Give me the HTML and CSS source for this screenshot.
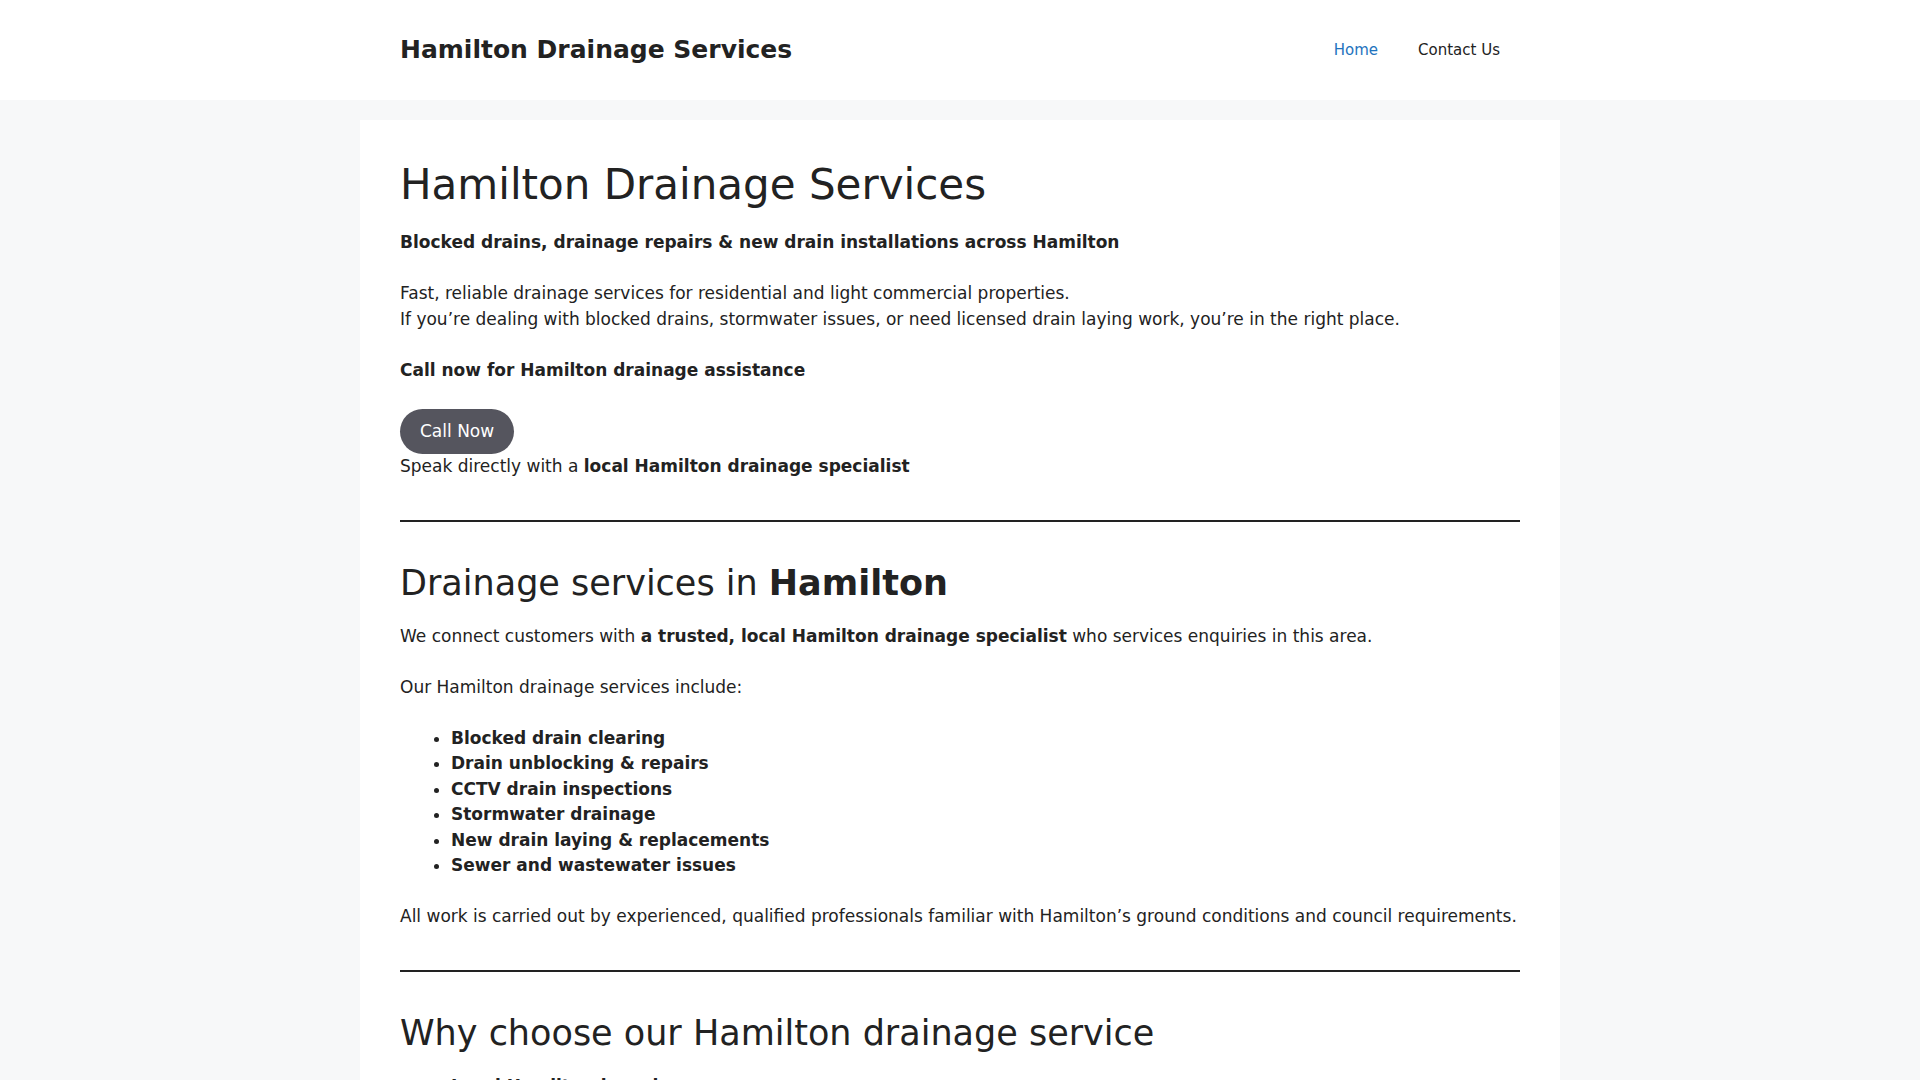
FILE: index.html
```html
<!DOCTYPE html>
<html lang="en">
<head>
<meta charset="utf-8">
<title>Hamilton Drainage Services</title>
<link rel="stylesheet" href="styles.css">
</head>
<body>
<header class="site-header">
  <div class="inside-header">
    <p class="main-title"><a href="#">Hamilton Drainage Services</a></p>
    <nav class="main-nav">
      <ul class="menu">
        <li class="current"><a href="#">Home</a></li>
        <li><a href="#">Contact Us</a></li>
      </ul>
    </nav>
  </div>
</header>
<div class="site-content">
  <main class="content-box">
    <h1>Hamilton Drainage Services</h1>
    <p><strong>Blocked drains, drainage repairs &amp; new drain installations across Hamilton</strong></p>
    <p>Fast, reliable drainage services for residential and light commercial properties.<br>If you’re dealing with blocked drains, stormwater issues, or need licensed drain laying work, you’re in the right place.</p>
    <p><strong>Call now for Hamilton drainage assistance</strong></p>
    <div class="btn-wrap"><a class="btn" href="#">Call Now</a></div>
    <p>Speak directly with a <strong>local Hamilton drainage specialist</strong></p>
    <hr class="sep">
    <h2>Drainage services in <strong>Hamilton</strong></h2>
    <p>We connect customers with <strong>a trusted, local Hamilton drainage specialist</strong> who services enquiries in this area.</p>
    <p>Our Hamilton drainage services include:</p>
    <ul class="list">
      <li><strong>Blocked drain clearing</strong></li>
      <li><strong>Drain unblocking &amp; repairs</strong></li>
      <li><strong>CCTV drain inspections</strong></li>
      <li><strong>Stormwater drainage</strong></li>
      <li><strong>New drain laying &amp; replacements</strong></li>
      <li><strong>Sewer and wastewater issues</strong></li>
    </ul>
    <p>All work is carried out by experienced, qualified professionals familiar with Hamilton’s ground conditions and council requirements.</p>
    <hr class="sep">
    <h2>Why choose our Hamilton drainage service</h2>
    <ul class="list">
      <li><strong>Local Hamilton-based</strong></li>
      <li><strong>Fast response times</strong></li>
      <li><strong>Licensed drainlayers</strong></li>
    </ul>
  </main>
</div>
</body>
</html>
```
FILE: styles.css
```css
* { box-sizing: border-box; }
html, body { margin: 0; padding: 0; }
body {
  background: #f7f8f9;
  color: #222222;
  font-family: "DejaVu Sans", sans-serif;
  font-size: 17px;
  line-height: 1.5;
}
a { text-decoration: none; color: #1e73be; }

.site-header { background: #ffffff; }
.inside-header {
  width: 1200px;
  margin: 0 auto;
  padding: 20px 40px;
  display: flex;
  align-items: center;
  justify-content: space-between;
}
.main-title {
  margin: 0;
  font-size: 25px;
  font-weight: 700;
  line-height: 1.2;
}
.main-title a { color: #222222; }
.menu {
  list-style: none;
  margin: 0;
  padding: 0;
  display: flex;
}
.menu li a {
  display: block;
  padding: 0 20px;
  line-height: 60px;
  font-size: 15px;
  color: #222222;
}
.menu li.current a { color: #1e73be; }

.site-content { padding-top: 20px; }
.content-box {
  display: block;
  width: 1200px;
  margin: 0 auto;
  background: #ffffff;
  padding: 40px;
}
h1 {
  font-size: 42px;
  font-weight: 400;
  line-height: 1.2;
  margin: 0 0 20px;
}
h2 {
  font-size: 35px;
  font-weight: 400;
  line-height: 1.2;
  margin: 0 0 20px;
}
p { margin: 0 0 1.5em; }
.btn-wrap { display: flex; }
.btn {
  display: inline-block;
  background: #55555e;
  color: #ffffff;
  border-radius: 9999px;
  padding: 10px 20px;
  font-size: 17px;
  line-height: 25.5px;
}
.sep {
  border: 0;
  border-top: 2px solid #222222;
  height: 0;
  margin: 40px 0 40px;
}
.list {
  margin: 0 0 1.5em 3em;
  padding: 0;
}
```
